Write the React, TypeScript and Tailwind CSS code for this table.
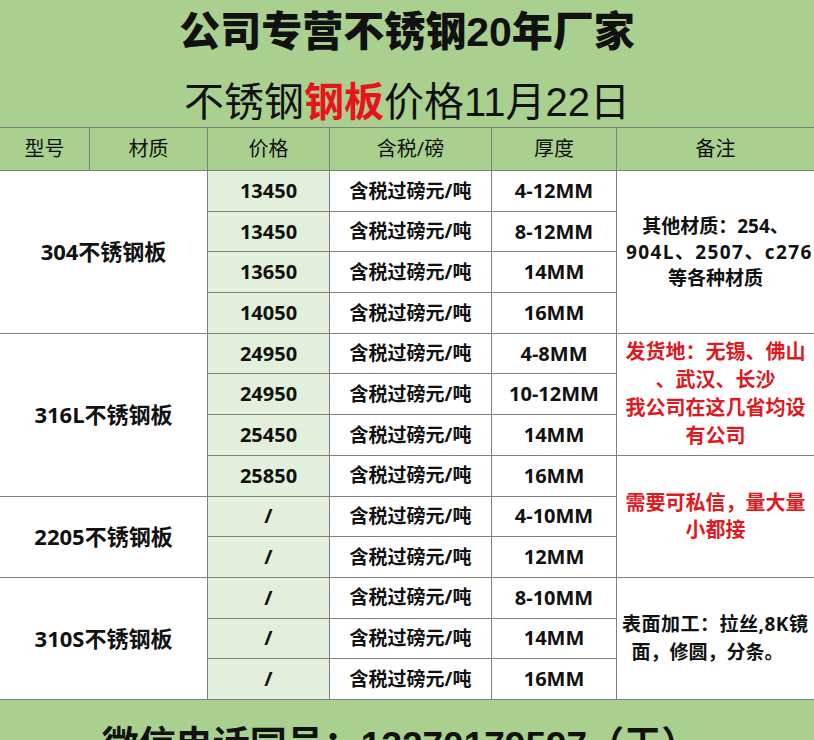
import React from 'react';

type Group = { name: string; span: string; items: [string, string][] };

const groups: Group[] = [
  {
    name: '304不锈钢板',
    span: 'row-span-4',
    items: [
      ['13450', '4-12MM'],
      ['13450', '8-12MM'],
      ['13650', '14MM'],
      ['14050', '16MM'],
    ],
  },
  {
    name: '316L不锈钢板',
    span: 'row-span-4',
    items: [
      ['24950', '4-8MM'],
      ['24950', '10-12MM'],
      ['25450', '14MM'],
      ['25850', '16MM'],
    ],
  },
  {
    name: '2205不锈钢板',
    span: 'row-span-2',
    items: [
      ['/', '4-10MM'],
      ['/', '12MM'],
    ],
  },
  {
    name: '310S不锈钢板',
    span: 'row-span-3',
    items: [
      ['/', '8-10MM'],
      ['/', '14MM'],
      ['/', '16MM'],
    ],
  },
];

const line = 'border-[#7f7f7f]';
const cell = `flex items-center justify-center border-r border-b ${line}`;
const remark = `flex flex-col justify-center overflow-hidden border-b ${line} bg-white font-bold`;

function Remark({ row }: { row: number }) {
  if (row === 0)
    return (
      <div className={`row-span-4 ${remark} text-[19px] leading-[26px] text-[#111]`}>
        <div className="whitespace-nowrap text-center">其他材质：254、</div>
        <div className="whitespace-nowrap pl-[9px] tracking-[1.4px]">904L、2507、c276</div>
        <div className="whitespace-nowrap text-center">等各种材质</div>
      </div>
    );
  if (row === 4)
    return (
      <div className={`row-span-3 ${remark} text-[20px] leading-[28px] text-[#e0191f]`}>
        <div className="whitespace-nowrap text-center">发货地：无锡、佛山</div>
        <div className="whitespace-nowrap text-center">、武汉、长沙</div>
        <div className="whitespace-nowrap text-center">我公司在这几省均设</div>
        <div className="whitespace-nowrap text-center">有公司</div>
      </div>
    );
  if (row === 7)
    return (
      <div className={`row-span-3 ${remark} text-[20px] leading-[27px] text-[#e0191f]`}>
        <div className="whitespace-nowrap text-center">需要可私信，量大量</div>
        <div className="whitespace-nowrap text-center">小都接</div>
      </div>
    );
  if (row === 10)
    return (
      <div className={`row-span-3 ${remark} text-[19px] leading-[28px] text-[#111]`}>
        <div className="whitespace-nowrap pl-[5px] tracking-[0.5px]">表面加工：拉丝,8K镜</div>
        <div className="whitespace-nowrap pr-[16px] text-center">面，修圆，分条。</div>
      </div>
    );
  return null;
}

export default function App() {
  const cells: React.ReactNode[] = [];
  let row = 0;
  groups.forEach((g) => {
    g.items.forEach(([price, thick], i) => {
      if (i === 0) {
        cells.push(
          <div key={`m${row}`} className={`col-span-2 ${g.span} ${cell} bg-white text-[22px] font-bold text-[#111]`}>
            {g.name}
          </div>
        );
      }
      cells.push(
        <div key={`p${row}`} className={`${cell} bg-[#e2efda] text-[20px] font-bold text-[#111]`}>
          {price}
        </div>
      );
      cells.push(
        <div key={`t${row}`} className={`${cell} bg-white text-[19px] font-bold text-[#111]`}>
          含税过磅元/吨
        </div>
      );
      cells.push(
        <div key={`h${row}`} className={`${cell} bg-white text-[20px] font-bold text-[#111]`}>
          {thick}
        </div>
      );
      cells.push(<Remark key={`r${row}`} row={row} />);
      row++;
    });
  });

  return (
    <div
      className="min-h-screen w-[814px] bg-[#a9d08e] text-[#111]"
      style={{ fontFamily: '"Open Sans", "Noto Sans CJK SC", sans-serif' }}
    >
      <div
        className="flex h-[65px] items-center justify-center text-[41px] font-black leading-none"
        style={{ fontFamily: '"Liberation Sans", "Noto Sans CJK SC", sans-serif' }}
      >
        公司专营不锈钢20年厂家
      </div>
      <div
        className="flex h-[62px] items-center justify-center pt-[12px] text-[40px] font-normal leading-none"
        style={{ fontFamily: '"Liberation Sans", "Noto Sans CJK SC", sans-serif' }}
      >
        不锈钢<span className="font-bold text-[#e8141c]">钢板</span>价格11月22日
      </div>

      <div className={`grid h-[572px] grid-cols-[90px_118px_122px_162px_125px_197px] grid-rows-[43px_repeat(13,40.69px)] border-t ${line}`}>
        <div className={`${cell} text-[20px]`}>型号</div>
        <div className={`${cell} text-[20px]`}>材质</div>
        <div className={`${cell} text-[20px]`}>价格</div>
        <div className={`${cell} text-[20px]`}>含税/磅</div>
        <div className={`${cell} text-[20px]`}>厚度</div>
        <div className={`flex items-center justify-center border-b ${line} text-[20px]`}>备注</div>
        {cells}
      </div>

      <div
        className="flex justify-center pb-[20px] pt-[28px] pr-[14px] text-[37px] font-bold leading-none"
        style={{ fontFamily: '"Liberation Sans", "Noto Sans CJK SC", sans-serif' }}
      >
        微信电话同号：13270179597（王）
      </div>
    </div>
  );
}
